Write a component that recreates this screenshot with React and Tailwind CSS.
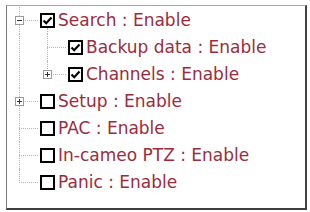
import React from 'react';

const nodes = [
  { label: 'Search : Enable', level: 0, checked: true, expander: 'minus', last: false, hasChildren: true },
  { label: 'Backup data : Enable', level: 1, checked: true, expander: null, last: false },
  { label: 'Channels : Enable', level: 1, checked: true, expander: 'plus', last: true },
  { label: 'Setup : Enable', level: 0, checked: false, expander: 'plus', last: false },
  { label: 'PAC : Enable', level: 0, checked: false, expander: null, last: false },
  { label: 'In-cameo PTZ : Enable', level: 0, checked: false, expander: null, last: false },
  { label: 'Panic : Enable', level: 0, checked: false, expander: null, last: true },
];

// tree connector line colour
const line = 'border-[#b4b4b4] border-dotted';

const Expander = ({ type }) => (
  <div className="relative z-10 w-[9px] h-[9px] border border-[#9a9a9a] bg-white flex items-center justify-center">
    <svg width="5" height="5" viewBox="0 0 5 5">
      <path d="M0 2.5 H5" stroke="#333" strokeWidth="1" />
      {type === 'plus' && <path d="M2.5 0 V5" stroke="#333" strokeWidth="1" />}
    </svg>
  </div>
);

const Checkbox = ({ checked }) => (
  <div className="w-[15px] h-[15px] border-2 border-black bg-white flex items-center justify-center shrink-0">
    {checked && (
      <svg width="11" height="11" viewBox="0 0 11 11">
        <path d="M1.5 5.5 L4.2 8.2 L9.5 2.5" fill="none" stroke="#000" strokeWidth="2.2" />
      </svg>
    )}
  </div>
);

const Row = ({ node }) => (
  <div className="flex items-center h-[27px]">
    {node.level === 1 && (
      <div className="relative w-[28px] h-full shrink-0">
        <div className={`absolute left-[12px] inset-y-0 border-l ${line}`} />
      </div>
    )}
    <div className="relative w-[33px] h-full shrink-0 flex items-center pl-[8px]">
      <div className={`absolute left-[12px] top-0 border-l ${line} ${node.last ? 'h-[14px]' : 'h-full'}`} />
      <div className={`absolute left-[12px] right-[2px] top-[13px] border-t ${line}`} />
      {node.expander && <Expander type={node.expander} />}
    </div>
    <div className="relative">
      <Checkbox checked={node.checked} />
      {node.hasChildren && <div className={`absolute left-[7px] top-full h-[6px] border-l ${line}`} />}
    </div>
    <span className="ml-[3px] text-[17px] leading-none text-[#9c2b3c] whitespace-nowrap">{node.label}</span>
  </div>
);

export default function App() {
  return (
    <div
      className="w-[310px] h-[212px] bg-white pt-[5px] pl-[6px]"
      style={{ fontFamily: '"DejaVu Sans", Verdana, sans-serif' }}
    >
      <div className="w-[301px] h-[205px] border-t border-l border-t-[#a8a8a8] border-l-[#7a7a7a] border-r-2 border-b-2 border-r-[#404040] border-b-[#404040] bg-white overflow-hidden pt-[1px]">
        {nodes.map((n) => (
          <Row key={n.label} node={n} />
        ))}
      </div>
    </div>
  );
}
